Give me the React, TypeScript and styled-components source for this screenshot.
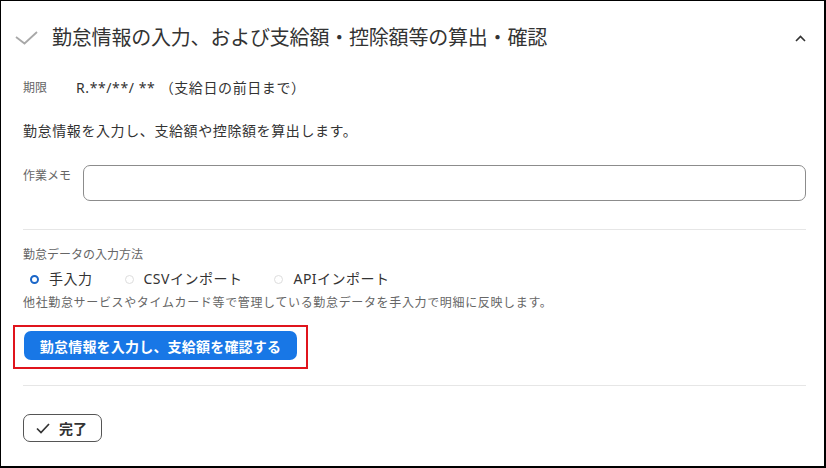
import styled, { createGlobalStyle } from "styled-components";

const GlobalStyle = createGlobalStyle`
  html, body {
    margin: 0;
    padding: 0;
    background: #fff;
  }
  body {
    font-family: "Noto Sans", "Noto Sans CJK JP", sans-serif;
    color: #333;
  }
  * { box-sizing: border-box; }
`;

const Frame = styled.div`
  width: 826px;
  height: 468px;
  border: 1px solid #000;
  border-right-width: 2px;
  border-bottom-width: 2px;
  background: #fff;
  overflow: hidden;
`;

const Header = styled.div`
  display: flex;
  align-items: center;
  padding: 23px 0 0 14px;
  height: 51px;
`;

const Title = styled.h2`
  flex: 1;
  margin: 0 0 0 14px;
  font-size: 20px;
  line-height: 28px;
  font-weight: 400;
  color: #333;
  letter-spacing: -0.2px;
`;

const Toggle = styled.button`
  border: 0;
  background: none;
  padding: 0;
  margin-right: 16px;
  width: 16px;
  height: 16px;
  display: flex;
  align-items: center;
  justify-content: center;
  cursor: pointer;
`;

const Body = styled.div`
  padding: 0 18px 0 22px;
`;

const DeadlineRow = styled.div`
  display: flex;
  align-items: center;
  margin-top: 26px;
  height: 20px;
`;

const SmallLabel = styled.span<{ $width?: number }>`
  font-size: 12px;
  line-height: 16px;
  color: #666;
  width: ${(p) => (p.$width ? `${p.$width}px` : "auto")};
  flex-shrink: 0;
`;

const Text = styled.span`
  font-size: 14px;
  line-height: 20px;
  color: #333;
  letter-spacing: 0.6px;
  white-space: pre;
`;

const Paragraph = styled.p<{ $top: number }>`
  margin: ${(p) => p.$top}px 0 0;
  font-size: 14px;
  line-height: 20px;
  color: #333;
  letter-spacing: 0.6px;
`;

const MemoRow = styled.div`
  display: flex;
  align-items: flex-start;
  margin-top: 24px;
`;

const MemoLabel = styled(SmallLabel)`
  padding-top: 3px;
`;

const MemoInput = styled.input`
  flex: 1;
  height: 36px;
  border: 1.5px solid #8c8c8c;
  border-radius: 7px;
  padding: 0 10px;
  font: inherit;
  font-size: 14px;
  outline: none;
`;

const Divider = styled.hr<{ $top: number }>`
  margin: ${(p) => p.$top}px 0 0;
  border: 0;
  border-top: 1px solid #e6e6e6;
  height: 0;
`;

const FieldLabel = styled.div`
  margin-top: 17px;
  font-size: 12px;
  line-height: 16px;
  color: #666;
`;

const RadioGroup = styled.div`
  display: flex;
  align-items: center;
  gap: 32px;
  margin-top: 6px;
  padding-left: 7px;
  height: 20px;
`;

const RadioOption = styled.label`
  display: flex;
  align-items: center;
  gap: 10px;
  font-size: 14px;
  line-height: 20px;
  color: #333;
  letter-spacing: 0.5px;
`;

const RadioDot = styled.span<{ $checked?: boolean }>`
  width: 9px;
  height: 9px;
  border-radius: 50%;
  border: ${(p) => (p.$checked ? "2.5px solid #1a66c8" : "1px solid #ddd")};
  background: #fff;
  flex-shrink: 0;
`;

const Hint = styled.div`
  margin-top: 6px;
  font-size: 12px;
  line-height: 16px;
  color: #666;
  letter-spacing: 0.65px;
`;

const Highlight = styled.div`
  margin: 14px 0 0 -10px;
  width: fit-content;
  border: 2px solid #e0141c;
  padding: 4px 9px 7px 9px;
`;

const PrimaryButton = styled.button`
  display: block;
  width: 273px;
  height: 29px;
  border: 0;
  border-radius: 7px;
  background: #1877e6;
  color: #fff;
  font-family: inherit;
  font-size: 14px;
  font-weight: 700;
  letter-spacing: 0.2px;
  cursor: pointer;
`;

const DoneButton = styled.button`
  margin-top: 28px;
  display: flex;
  align-items: center;
  gap: 9px;
  width: 79px;
  height: 28px;
  padding: 0 0 0 12px;
  border: 1px solid #555;
  border-radius: 7px;
  background: #fff;
  color: #333;
  font-family: inherit;
  font-size: 14px;
  font-weight: 700;
  cursor: pointer;
`;

export default function App() {
  return (
    <>
      <GlobalStyle />
      <Frame>
        <Header>
          <svg width="23" height="14" viewBox="0 0 23 14">
            <path d="M1 6 L9.5 12.5 L22 1" fill="none" stroke="#a8a8a8" strokeWidth="1.8" />
          </svg>
          <Title>勤怠情報の入力、および支給額・控除額等の算出・確認</Title>
          <Toggle aria-label="閉じる">
            <svg width="11" height="7" viewBox="0 0 11 7">
              <path d="M1 6 L5.5 1.5 L10 6" fill="none" stroke="#333" strokeWidth="1.6" />
            </svg>
          </Toggle>
        </Header>
        <Body>
          <DeadlineRow>
            <SmallLabel $width={53}>期限</SmallLabel>
            <Text>R.**/**/ ** （支給日の前日まで）</Text>
          </DeadlineRow>
          <Paragraph $top={23}>勤怠情報を入力し、支給額や控除額を算出します。</Paragraph>
          <MemoRow>
            <MemoLabel $width={60}>作業メモ</MemoLabel>
            <MemoInput type="text" />
          </MemoRow>
          <Divider $top={28} />
          <FieldLabel>勤怠データの入力方法</FieldLabel>
          <RadioGroup>
            <RadioOption>
              <RadioDot $checked />
              手入力
            </RadioOption>
            <RadioOption>
              <RadioDot />
              CSVインポート
            </RadioOption>
            <RadioOption>
              <RadioDot />
              APIインポート
            </RadioOption>
          </RadioGroup>
          <Hint>他社勤怠サービスやタイムカード等で管理している勤怠データを手入力で明細に反映します。</Hint>
          <Highlight>
            <PrimaryButton>勤怠情報を入力し、支給額を確認する</PrimaryButton>
          </Highlight>
          <Divider $top={16} />
          <DoneButton>
            <svg width="14" height="11" viewBox="0 0 14 11">
              <path d="M1 5.5 L5 9.5 L13 1" fill="none" stroke="#333" strokeWidth="1.7" />
            </svg>
            完了
          </DoneButton>
        </Body>
      </Frame>
    </>
  );
}
